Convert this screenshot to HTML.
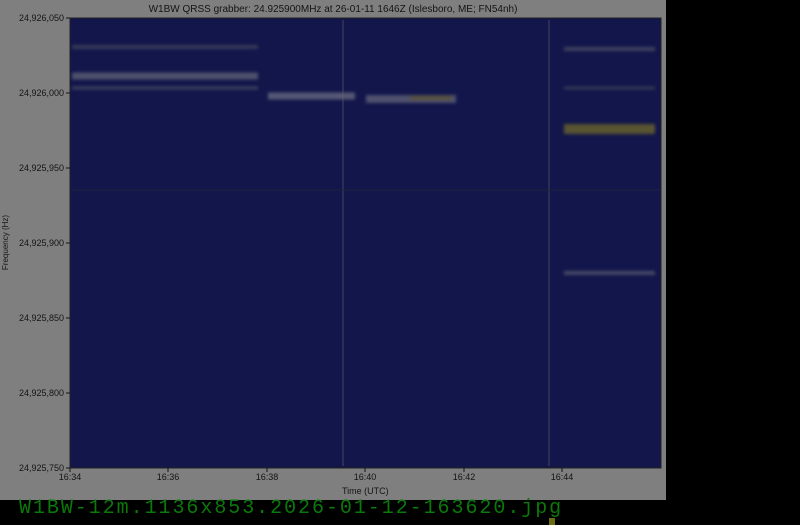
<!DOCTYPE html>
<html><head><meta charset="utf-8"><style>
body{margin:0;width:800px;height:525px;background:#000;overflow:hidden;font-family:"Liberation Sans",sans-serif}
#img{position:absolute;left:0;top:0;width:666px;height:500px;background:#7f7f7f}
.t{position:absolute;font-size:9px;color:#141414}
.yl{position:absolute;left:0;width:64px;text-align:right;font-size:9px;color:#141414}
.xl{position:absolute;top:472px;width:40px;text-align:center;font-size:9px;color:#141414}
#foot{position:absolute;left:19px;top:497px;font-family:"Liberation Mono",monospace;font-size:20px;color:#0a780a;letter-spacing:1.95px}
</style></head><body>
<div id="img">
<div class="t" style="left:0;width:666px;text-align:center;top:4px;font-size:10px">W1BW QRSS grabber: 24.925900MHz at 26-01-11 1646Z (Islesboro, ME; FN54nh)</div>
<svg style="position:absolute;left:0;top:0" width="666" height="500">
<defs><filter id="b"><feGaussianBlur stdDeviation="1.5"/></filter></defs>
<rect x="70" y="18" width="591" height="450" fill="#12164a" stroke="#222" stroke-width="1"/>
<g opacity="0.45" fill="none" filter="url(#b)">
<path d="M72 47 H258" stroke="#666" stroke-width="4"/>
<path d="M72 76 H258" stroke="#999" stroke-width="7"/>
<path d="M72 88 H258" stroke="#777" stroke-width="3"/>
<path d="M268 96 H355" stroke="#aaa" stroke-width="7"/>
<path d="M366 99 H456" stroke="#999" stroke-width="8"/>
<path d="M410 98 H452" stroke="#aa9a20" stroke-width="5"/>
<path d="M564 49 H655" stroke="#777" stroke-width="4"/>
<path d="M564 88 H655" stroke="#666" stroke-width="3"/>
<path d="M564 129 H655" stroke="#b0a018" stroke-width="10"/>
<path d="M564 273 H655" stroke="#888" stroke-width="4"/>
</g>
<g opacity="0.4" fill="none">
<path d="M343 20 V466" stroke="#666" stroke-width="1.5"/>
<path d="M549 20 V466" stroke="#666" stroke-width="1.5"/>
<path d="M72 190 H660" stroke="#333" stroke-width="1"/>
</g>
<g stroke="#141414" stroke-width="1">
<path d="M66 18h4M66 93h4M66 168h4M66 243h4M66 318h4M66 393h4M66 468h4"/>
<path d="M70 468v4M168 468v4M267 468v4M365 468v4M464 468v4M562 468v4"/>
</g>
</svg>
<div class="yl" style="top:13px">24,926,050</div>
<div class="yl" style="top:88px">24,926,000</div>
<div class="yl" style="top:163px">24,925,950</div>
<div class="yl" style="top:238px">24,925,900</div>
<div class="yl" style="top:313px">24,925,850</div>
<div class="yl" style="top:388px">24,925,800</div>
<div class="yl" style="top:463px">24,925,750</div>
<div class="xl" style="left:50px">16:34</div>
<div class="xl" style="left:148px">16:36</div>
<div class="xl" style="left:247px">16:38</div>
<div class="xl" style="left:345px">16:40</div>
<div class="xl" style="left:444px">16:42</div>
<div class="xl" style="left:542px">16:44</div>
<div class="t" style="left:342px;top:486px">Time (UTC)</div>
<div class="t" style="left:-22px;top:238px;transform:rotate(-90deg);font-size:8px">Frequency (Hz)</div>
</div>
<div id="foot">W1BW-12m.1136x853.2026-01-12-163620.jpg</div>
<div style="position:absolute;left:549px;top:518px;width:6px;height:7px;background:#6a6a10"></div>
</body></html>
